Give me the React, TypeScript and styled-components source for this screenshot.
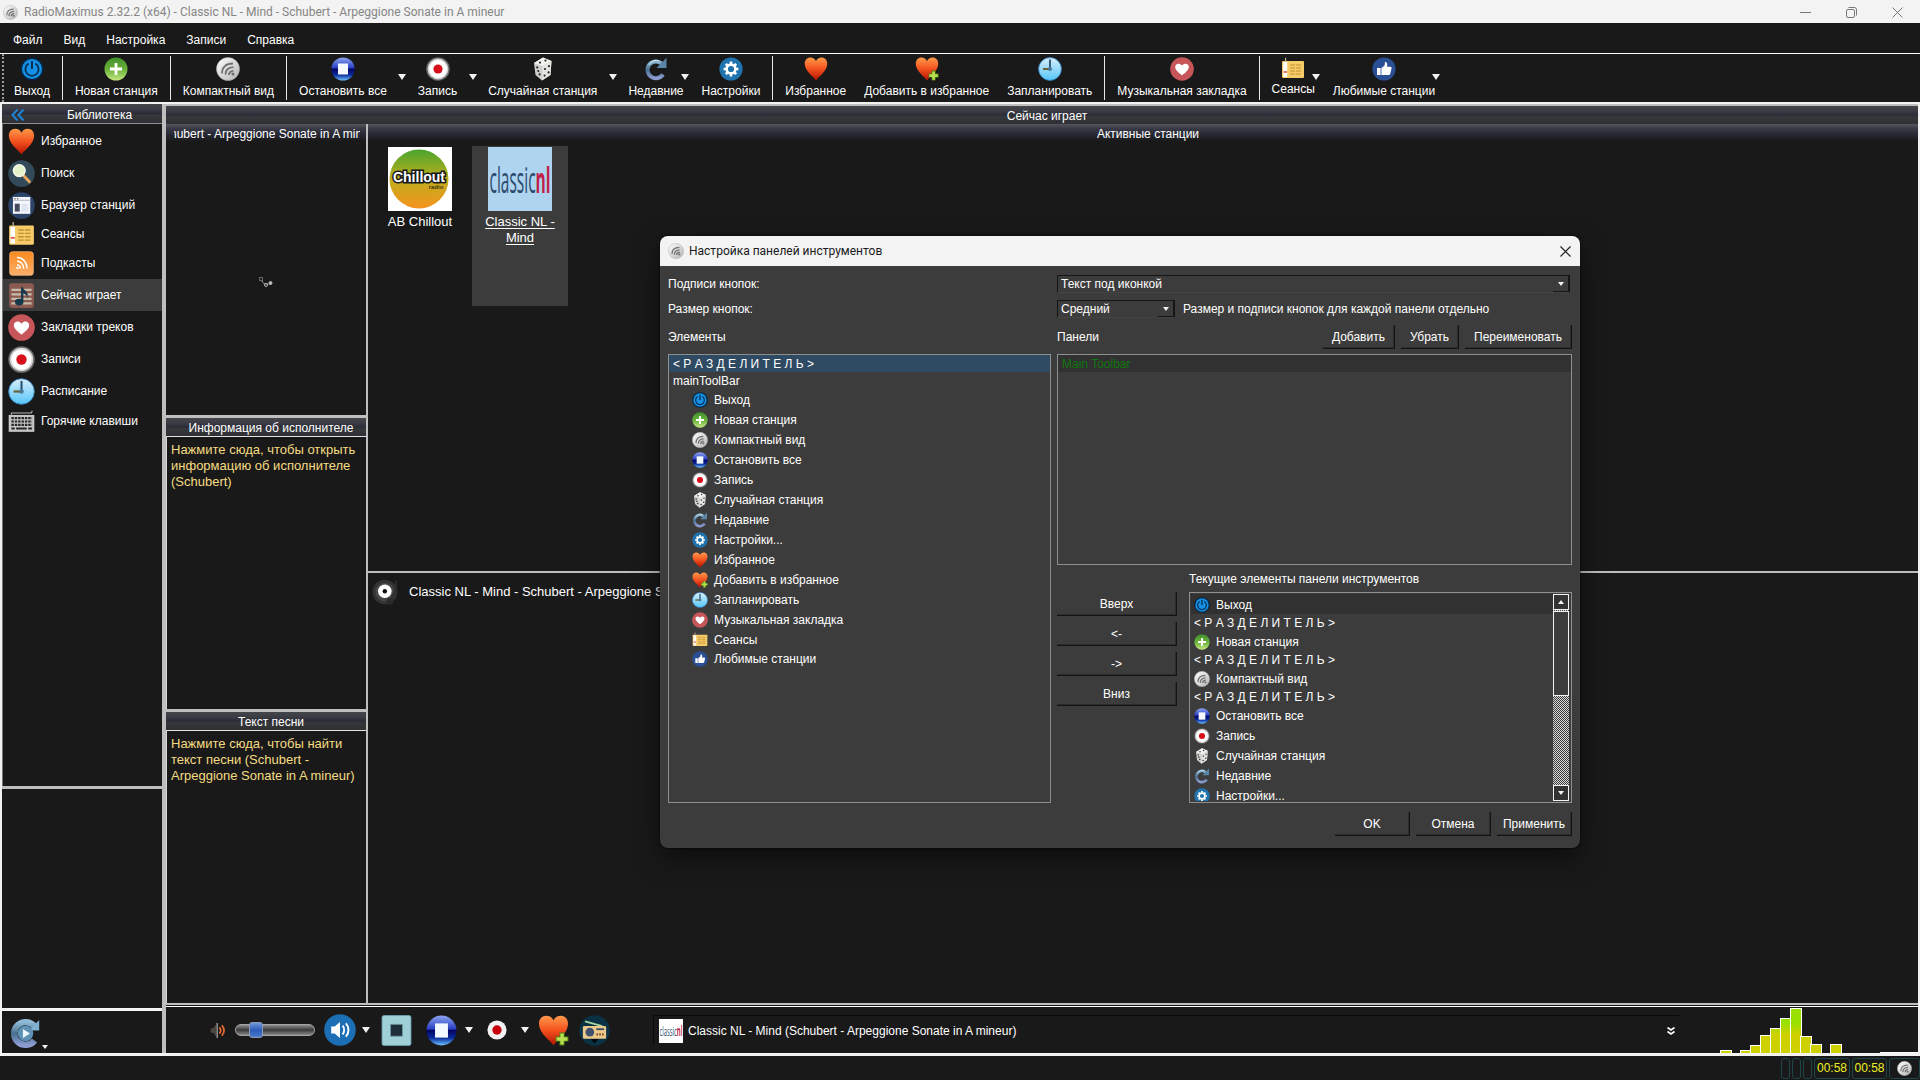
import React from 'react';
import styled, { createGlobalStyle, css } from 'styled-components';

const Global = createGlobalStyle`
  * { box-sizing: border-box; }
  body { margin: 0; background: #191919; color: #fff; font: 12px/14px "Liberation Sans", Arial, sans-serif; }
  button, select, input { font: inherit; color: inherit; margin: 0; }
  button { background: none; border: 0; padding: 0; }
  ul { list-style: none; margin: 0; padding: 0; }
  svg { display: block; flex: none; }
`;

/* ---------- icons ---------- */

const Defs = styled.svg`
  position: absolute;
  width: 0;
  height: 0;
`;

const Gradients = () => (
  <Defs aria-hidden="true">
    <defs>
      <linearGradient id="heartG" x1="0" y1="0" x2="0" y2="1">
        <stop offset="0" stopColor="#ff9a4a" />
        <stop offset=".5" stopColor="#f4511e" />
        <stop offset="1" stopColor="#b31204" />
      </linearGradient>
      <linearGradient id="greenG" x1="0" y1="0" x2="0" y2="1">
        <stop offset="0" stopColor="#3f8f2b" />
        <stop offset=".55" stopColor="#6fb63c" />
        <stop offset="1" stopColor="#c6e884" />
      </linearGradient>
      <linearGradient id="blueG" x1="0" y1="0" x2="0" y2="1">
        <stop offset="0" stopColor="#8da4f0" />
        <stop offset=".45" stopColor="#2a3fc4" />
        <stop offset=".5" stopColor="#050560" />
        <stop offset=".75" stopColor="#0a2a9c" />
        <stop offset="1" stopColor="#6fc4ff" />
      </linearGradient>
      <linearGradient id="silverG" x1="0" y1="0" x2="1" y2="1">
        <stop offset="0" stopColor="#ffffff" />
        <stop offset="1" stopColor="#b4b4b4" />
      </linearGradient>
      <linearGradient id="clockG" x1="0" y1="0" x2="0" y2="1">
        <stop offset="0" stopColor="#d8eefb" />
        <stop offset="1" stopColor="#55c6fb" />
      </linearGradient>
      <linearGradient id="steelG" x1="0" y1="0" x2="0" y2="1">
        <stop offset="0" stopColor="#8fbbd8" />
        <stop offset=".5" stopColor="#48708f" />
        <stop offset="1" stopColor="#8c9bd0" />
      </linearGradient>
      <linearGradient id="orangeG" x1="0" y1="0" x2="0" y2="1">
        <stop offset="0" stopColor="#f98a1d" />
        <stop offset="1" stopColor="#fcae6a" />
      </linearGradient>
      <linearGradient id="chillG" x1="0" y1="0" x2="0" y2="1">
        <stop offset="0" stopColor="#4aa52c" />
        <stop offset=".5" stopColor="#bfae1d" />
        <stop offset="1" stopColor="#f6931f" />
      </linearGradient>
    </defs>
  </Defs>
);

const HEART = 'M12 23.5 C9.5 19.5 1.5 15 .8 7.5 C.4 3 3.4 .6 6.4 .6 C9 .6 11 2 12 4.2 C13 2 15 .6 17.6 .6 C20.6 .6 23.6 3 23.2 7.5 C22.5 15 14.5 19.5 12 23.5Z';

const art: Record<string, React.ReactNode> = {
  power: (
    <>
      <circle cx="12" cy="12" r="11.8" fill="#052440" />
      <circle cx="12" cy="12" r="10" fill="#1590e6" />
      <path d="M8.6 6.6 A6.6 6.6 0 1 0 15.4 6.6" fill="none" stroke="#06304f" strokeWidth="1.8" />
      <path d="M12 4 V12" stroke="#06304f" strokeWidth="2" />
    </>
  ),
  plus: (
    <>
      <circle cx="12" cy="12" r="11.5" fill="url(#greenG)" />
      <path d="M12 6 V18 M6 12 H18" stroke="#fff" strokeWidth="2.8" />
    </>
  ),
  radio: (
    <>
      <circle cx="12" cy="12" r="11.5" fill="url(#silverG)" stroke="#aaa" strokeWidth=".6" />
      <g fill="none" stroke="#707070" strokeWidth="1.8">
        <path d="M6 16.5 C6 10 10 6.5 17 6.5" />
        <path d="M9.5 17.5 C9.5 13 12 10.4 17.5 10.2" />
        <path d="M13 18 C13 15.6 14.5 14 17.5 13.8" />
      </g>
      <circle cx="17" cy="17" r="1.6" fill="#707070" />
    </>
  ),
  stop: (
    <>
      <circle cx="12" cy="12" r="11.6" fill="url(#blueG)" />
      <rect x="7" y="6.5" width="10" height="11" fill="#f4f8ff" />
    </>
  ),
  record: (
    <>
      <circle cx="12" cy="12" r="11.8" fill="#6b6b6b" />
      <circle cx="12" cy="12" r="10.4" fill="#d5d5d5" />
      <circle cx="12" cy="12" r="9" fill="#fff" />
      <circle cx="12" cy="12" r="4.6" fill="#d8101c" />
    </>
  ),
  recordSmall: (
    <>
      <circle cx="12" cy="12" r="11.5" fill="#f2f2f2" />
      <circle cx="12" cy="12" r="5.6" fill="#c8000c" />
    </>
  ),
  dice: (
    <>
      <path d="M3 6 L12 .5 L20.5 4 L19.5 18 L11 23.5 L4.5 18Z" fill="#cfcfcb" />
      <path d="M3 6 L12 .5 L20.5 4 L11.5 9Z" fill="#f3f3f0" />
      <path d="M11.5 9 L20.5 4 L19.5 18 L11 23.5Z" fill="#e4e4e0" />
      <g fill="#2a2a2a">
        <circle cx="9" cy="5.6" r="1.1" /><circle cx="14.5" cy="3.6" r="1.1" />
        <circle cx="6.2" cy="10.4" r="1.1" /><circle cx="8.6" cy="17.4" r="1.1" /><circle cx="7.3" cy="14" r="1.1" />
        <circle cx="14" cy="12" r="1.1" /><circle cx="18" cy="9.2" r="1.1" />
        <circle cx="13.6" cy="18.6" r="1.1" /><circle cx="17.6" cy="15.4" r="1.1" />
      </g>
    </>
  ),
  recent: (
    <>
      <path d="M17.5 6.5 A8.4 8.4 0 1 0 19 17.4" fill="none" stroke="url(#steelG)" strokeWidth="4" />
      <path d="M22.5 .8 V11 H12.5Z" fill="#5b86a8" />
      <path d="M5 8 A8.6 8.6 0 0 1 15 3.6" fill="none" stroke="#cfe2f0" strokeWidth="1" />
    </>
  ),
  gear: (
    <>
      <circle cx="12" cy="12" r="11.6" fill="#1f74b0" />
      <circle cx="12" cy="12" r="4.4" fill="none" stroke="#fff" strokeWidth="2.6" />
      <path d="M12 4.6 V7 M12 17 V19.4 M4.6 12 H7 M17 12 H19.4 M6.8 6.8 L8.5 8.5 M15.5 15.5 L17.2 17.2 M17.2 6.8 L15.5 8.5 M8.5 15.5 L6.8 17.2" stroke="#fff" strokeWidth="2.6" />
    </>
  ),
  heart: <path d={HEART} fill="url(#heartG)" />,
  heartPlus: (
    <>
      <path d={HEART} fill="url(#heartG)" />
      <path d="M18.6 13.6 V23.6 M13.6 18.6 H23.6" stroke="#4d7d14" strokeWidth="4" />
      <path d="M18.6 14.4 V22.8 M14.4 18.6 H22.8" stroke="#b6e04e" strokeWidth="2.6" />
    </>
  ),
  clock: (
    <>
      <circle cx="12" cy="12" r="11.4" fill="url(#clockG)" stroke="#2f7fc0" strokeWidth=".8" />
      <path d="M12 2.6 V12" stroke="#27506e" strokeWidth="1.8" />
      <path d="M12 12 H5" stroke="#6b6430" strokeWidth="2" />
      <circle cx="12" cy="12" r="2" fill="#4a7896" />
    </>
  ),
  bookmark: (
    <>
      <circle cx="12" cy="12" r="11.8" fill="#c7565a" />
      <path d="M12 18.4 C9 15.8 5 13.2 5.2 9.8 C5.4 6.6 9.6 5.4 12 8.6 C14.4 5.4 18.6 6.6 18.8 9.8 C19 13.2 15 15.8 12 18.4Z" fill="#fff" />
    </>
  ),
  sessions: (
    <>
      <rect x="1" y="4" width="22" height="17" rx="1" fill="#f6cb6a" />
      <rect x="2.2" y="5" width="4" height="15" fill="#fff" />
      <path d="M4.6 .8 V5" stroke="#c9b68a" strokeWidth="1.2" />
      <path d="M9 8 H21 M9 11 H21 M9 14 H21 M9 17 H21" stroke="#c5922f" strokeWidth="1.2" strokeDasharray="5 1" />
      <path d="M2.6 15 H6" stroke="#d8402c" strokeWidth="1.4" />
    </>
  ),
  thumb: (
    <>
      <circle cx="12" cy="12" r="11.6" fill="#2a4f94" />
      <path d="M5 11 H8.6 V18 H5Z M9.4 11 L12.6 8.4 L13 5 C15.4 5 15.6 7.4 15 9.8 H18.6 C19.6 9.8 19.8 11 19.4 12 L18.2 16.8 C18 17.6 17.4 18 16.6 18 H9.4Z" fill="#fff" />
    </>
  ),
  search: (
    <>
      <circle cx="12" cy="12" r="11.8" fill="#324a5a" />
      <path d="M14 14 L19 19.4" stroke="#e8a55a" strokeWidth="2.6" strokeLinecap="round" />
      <circle cx="10" cy="9.4" r="5.2" fill="#e4f2c9" stroke="#f4f8ea" strokeWidth="1.4" />
    </>
  ),
  browser: (
    <>
      <circle cx="12" cy="12" r="11.8" fill="#2b4468" />
      <rect x="4.4" y="4.4" width="15.4" height="15" fill="#f4f6fb" />
      <path d="M4.4 7.4 H19.8" stroke="#b8bccb" strokeWidth="1" />
      <circle cx="6.2" cy="6" r=".7" fill="#666" /><circle cx="8.6" cy="6" r=".7" fill="#666" />
      <rect x="6" y="10.4" width="4.4" height="7" fill="#454a5e" />
      <rect x="12" y="10.4" width="6" height="7" fill="#dfe5f3" />
    </>
  ),
  podcast: (
    <>
      <rect x="1.5" y="1.5" width="21" height="21" rx="2.5" fill="url(#orangeG)" stroke="#ffc088" strokeWidth=".6" />
      <g fill="none" stroke="#fff" strokeWidth="1.3">
        <path d="M8 6.5 C13 7 16.5 10.5 17 16.5" />
        <path d="M8 9.8 C11.4 10.2 13.6 12.4 14 16.5" />
        <path d="M8 13 C9.8 13.4 10.8 14.4 11 16.5" />
      </g>
      <circle cx="8.4" cy="16" r="1.1" fill="#fff" />
    </>
  ),
  note: (
    <>
      <rect x="1" y="1" width="22" height="22" rx="2.5" fill="#8c5a50" />
      <path d="M3 7 H21 M3 11 H21 M3 15 H21 M3 19 H21" stroke="#c3bba8" strokeWidth="1.8" />
      <path d="M12.6 5 V17" stroke="#17384a" strokeWidth="2" />
      <path d="M11.8 3.4 C13.4 8 19.5 8 17 15 C17.2 11 15 10.6 11.8 9.6Z" fill="#17384a" />
      <ellipse cx="10" cy="17.8" rx="3.8" ry="3" fill="#17384a" />
    </>
  ),
  keyboard: (
    <>
      <path d="M3 6 V4.4 H20 C21 4.4 21.4 3.8 21.4 2.4" fill="none" stroke="#b5b5b5" strokeWidth="1" />
      <rect x=".6" y="6.2" width="22.8" height="15" fill="#c6c6c6" />
      <path d="M3 9 H21.4 M3 12 H21.4 M3 15 H21.4" stroke="#262626" strokeWidth="1.8" strokeDasharray="2.2 .8" />
      <path d="M3 18.2 H6 M7.2 18.2 H16.6 M18 18.2 H21.4" stroke="#262626" strokeWidth="1.8" />
    </>
  ),
  volume: (
    <>
      <circle cx="12" cy="12" r="11.8" fill="#1c6fb4" />
      <path d="M5.4 9.4 H8 L12 6 V18 L8 14.6 H5.4Z" fill="#fff" />
      <path d="M14 8.8 C15.4 10.6 15.4 13.4 14 15.2 M16.4 7 C19 9.8 19 14.2 16.4 17" fill="none" stroke="#fff" strokeWidth="1.5" />
    </>
  ),
  mute: (
    <>
      <path d="M1 8.5 H5 L10 2 V22 L5 15.5 H1Z" fill="#4a4642" />
      <path d="M11.5 0 V24" stroke="#9a9a9a" strokeWidth="2.2" />
      <path d="M15 7 C17.6 10 17.6 14 15 17 M19 3.6 C23.4 9 23.4 15 19 20.4" fill="none" stroke="#e56a2e" strokeWidth="2.8" />
    </>
  ),
  panelStop: (
    <>
      <rect x=".8" y=".4" width="22.4" height="23.2" rx="1.4" fill="#9fd0d8" stroke="#6ca5b2" strokeWidth=".6" />
      <rect x="7.4" y="7.2" width="9.2" height="9.2" fill="#1f2f3a" stroke="#6f9aa5" strokeWidth=".6" />
    </>
  ),
  receiver: (
    <>
      <circle cx="12" cy="12" r="11.8" fill="#0b3145" />
      <path d="M4.6 5 L18 8.6" stroke="#a8d6a0" strokeWidth="1.4" />
      <rect x="3" y="8.6" width="18" height="9.8" rx="1" fill="#eac98a" />
      <circle cx="8.4" cy="13.2" r="3.4" fill="#41506e" />
      <path d="M13.4 11 H19.4" stroke="#3a4a60" strokeWidth="1.4" />
      <path d="M13.4 15 H19.4" stroke="#8a5a2c" strokeWidth="1.8" strokeDasharray="1.4 .8" />
      <path d="M9 18.5 H15 L12 22Z" fill="#05090c" />
    </>
  ),
  replay: (
    <>
      <path d="M19 6.6 A8.8 8.8 0 1 0 19 17.4" fill="none" stroke="url(#steelG)" strokeWidth="5" />
      <path d="M22.6 1.6 V9.6 H14.6Z" fill="#7fb2d2" />
      <circle cx="12" cy="12" r="6" fill="#5f93b5" />
      <path d="M10 8.6 L15.4 12 L10 15.4Z" fill="#f1f9ff" />
    </>
  ),
  disc: (
    <>
      <circle cx="11" cy="12" r="10.6" fill="#333" />
      <circle cx="11" cy="12" r="8" fill="#484848" />
      <circle cx="11" cy="11.4" r="5.8" fill="#fff" />
      <circle cx="11" cy="11.4" r="1.9" fill="#111" />
      <circle cx="15.4" cy="20" r="3" fill="#2b2b2b" />
      <path d="M20.6 2.4 V9 L16 19" fill="none" stroke="#2e2e2e" strokeWidth="1.6" />
    </>
  ),
};

const Icon = ({ name, size = 24 }: { name: string; size?: number }) => (
  <svg width={size} height={size} viewBox="0 0 24 24" aria-hidden="true">
    {art[name]}
  </svg>
);

const Triangle = styled.i<{ $up?: boolean; $small?: boolean }>`
  display: block;
  width: 0;
  height: 0;
  border: ${(p) => (p.$small ? 3 : 4)}px solid transparent;
  border-bottom-width: 0;
  border-top: ${(p) => (p.$small ? 4 : 6)}px solid #f2f2f2;
  ${(p) => p.$up && css`transform: rotate(180deg);`}
`;

/* ---------- main window ---------- */

const Page = styled.div`
  display: flex;
  flex-direction: column;
  min-height: 100vh;
  position: relative;
  background: #191919;
`;

const TitleBar = styled.header`
  display: flex;
  align-items: center;
  gap: 6px;
  height: 23px;
  padding: 1px 0 0 3px;
  background: #f3f3f3;
  color: #858585;
  font-family: Roboto, "Open Sans", sans-serif;
  font-size: 12px;
`;

const WindowButtons = styled.div`
  display: flex;
  align-items: center;
  margin-left: auto;
`;

const WindowButton = styled.button`
  display: grid;
  place-items: center;
  width: 46px;
  height: 20px;
  color: #777;
`;

const MenuBar = styled.nav`
  display: flex;
  align-items: center;
  gap: 21px;
  height: 31px;
  padding: 3px 13px 0;
  border-bottom: 1px solid #fff;
`;

const Toolbar = styled.div`
  display: flex;
  height: 48px;
  padding-left: 2px;
`;

const Handle = styled.div`
  width: 3px;
  border-left: 2px dotted #9a9a9a;
`;

const ToolItem = styled.div`
  display: flex;
  position: relative;
`;

const ToolButton = styled.button`
  display: flex;
  flex-direction: column;
  align-items: center;
  gap: 3px;
  padding: 3px 9px 0;
  white-space: nowrap;
`;

const ToolIcon = styled.span<{ $short?: boolean }>`
  display: block;
  height: ${(p) => (p.$short ? 22 : 24)}px;
  overflow: hidden;
`;

const SplitArrow = styled.button`
  display: flex;
  justify-content: center;
  align-items: flex-start;
  width: 13px;
  padding-top: 20px;
`;

const CornerArrow = styled.span`
  position: absolute;
  right: 4px;
  top: 20px;
`;

const ToolSeparator = styled.div`
  width: 1px;
  margin: 2px 3px;
  background: #e8e8e8;
`;

const Workspace = styled.div`
  display: flex;
  flex: 1;
  border: 2px solid #f2f2f2;
  border-bottom-width: 3px;
`;

const Sidebar = styled.aside`
  display: flex;
  flex-direction: column;
  flex: 0 0 160px;
`;

const PanelHeader = styled.h2<{ $lined?: boolean; $short?: boolean }>`
  display: flex;
  align-items: center;
  justify-content: center;
  flex: none;
  height: ${(p) => (p.$lined ? 19 : p.$short ? 17 : 18)}px;
  margin: 0;
  padding: 2px 0 0 10px;
  border-bottom: ${(p) => (p.$lined ? '1px solid #e2e2e2' : '0')};
  font-size: 12px;
  font-weight: 400;
  white-space: nowrap;
  background: ${(p) =>
    p.$short
      ? 'linear-gradient(#55555c, #3a3b46 25%, #272935 60%, #1e1f22 90%, #191919)'
      : 'linear-gradient(#45464a, #3c3d45 25%, #2b2c38 50%, #36373a 60%, #2f3033)'};
`;

const SidebarHeader = styled(PanelHeader)`
  height: 20px;
  padding-left: 9px;
  border-bottom: 1px solid #8f8f8f;

  button { color: #1d84d6; }
  span { flex: 1; padding-left: 12px; text-align: center; }
`;

const NavList = styled.ul`
  flex: 1;
  padding-top: 1px;
  border-left: 1px solid #777;
`;

const NavButton = styled.button<{ $height: number; $active?: boolean }>`
  display: flex;
  align-items: center;
  gap: 6px;
  width: 100%;
  height: ${(p) => p.$height}px;
  padding-left: 5px;
  background: ${(p) => (p.$active ? '#3c3c3c' : 'none')};
`;

const SideBox = styled.div`
  height: 219px;
`;

const SideFooter = styled.div`
  display: flex;
  align-items: flex-end;
  height: 42px;
  padding: 0 0 4px 8px;
  gap: 1px;
`;

const VRule = styled.div<{ $w: number }>`
  flex: 0 0 ${(p) => p.$w}px;
  background: #bebebe;
`;

const HRule = styled.div<{ $h: number; $bright?: boolean }>`
  flex: 0 0 ${(p) => p.$h}px;
  background: ${(p) => (p.$bright ? '#f4f4f4' : '#bebebe')};
`;

const Main = styled.main`
  display: flex;
  flex-direction: column;
  flex: 1;
  min-width: 0;
`;

const Split = styled.div`
  display: flex;
  flex: 1;
`;

const InfoColumn = styled.div`
  display: flex;
  flex-direction: column;
  flex: 0 0 200px;
  min-width: 0;
`;

const InfoPanel = styled.section`
  display: flex;
  flex-direction: column;
  flex: 1 1 0;
  min-width: 0;
`;

const Marquee = styled.span`
  flex: 1;
  margin: 0 6px 0 -2px;
  overflow: hidden;
  text-indent: -18px;
`;

const CoverArea = styled.div`
  display: grid;
  place-items: center;
  flex: 1;
  padding-top: 8px;
`;

const HintLink = styled.a`
  flex: 1;
  padding: 5px 4px;
  border-left: 1px solid #d5d5d5;
  color: #f5dc82;
  font-size: 13px;
  line-height: 16px;
  text-decoration: none;
`;

const StationColumn = styled.div`
  display: flex;
  flex-direction: column;
  flex: 1;
`;

const Stations = styled.div`
  display: flex;
  align-items: flex-start;
  gap: 4px;
  flex: 49 1 0;
  padding: 5px 4px;
`;

const StationTile = styled.button<{ $active?: boolean }>`
  display: flex;
  flex-direction: column;
  align-items: center;
  gap: 3px;
  width: 96px;
  height: 160px;
  padding: 1px 8px;
  font-size: 13px;
  line-height: 16px;
  background: ${(p) => (p.$active ? '#3c3c3c' : 'none')};
  text-decoration: ${(p) => (p.$active ? 'underline' : 'none')};
  text-underline-offset: 2px;
`;

const Playlist = styled.div`
  flex: 49 1 0;
  padding: 5px 4px;
`;

const Track = styled.div`
  display: flex;
  align-items: center;
  gap: 9px;
  font-size: 13px;
  line-height: 28px;
`;

const Player = styled.div`
  display: flex;
  align-items: center;
  height: 47px;
  border-top: 1px solid #fff;
  margin-top: 1px;
  padding-left: 44px;
`;

const Volume = styled.input`
  appearance: none;
  width: 80px;
  height: 20px;
  background: none;

  && { margin: 0 8px 0 10px; }

  &::-webkit-slider-runnable-track {
    height: 12px;
    border: 1px solid #a5a5a5;
    border-radius: 6px;
    background: linear-gradient(#8e8e8e, #3a3a3a 50%, #8a8a8a);
  }
  &::-webkit-slider-thumb {
    appearance: none;
    width: 14px;
    height: 16px;
    margin-top: -3px;
    border: 1px solid #8f9bb0;
    border-radius: 3px;
    background: linear-gradient(#6f96d8, #2c5cb8 50%, #4a7cd0);
  }
`;

const PlayerGroup = styled.div`
  display: flex;
`;

const PlayerButton = styled.button<{ $w: number }>`
  display: grid;
  place-items: center;
  width: ${(p) => p.$w}px;
  height: 40px;
`;

const NowPlaying = styled.div`
  display: flex;
  align-items: center;
  gap: 5px;
  flex: 1;
  height: 30px;
  margin-left: 42px;
  padding: 0 4px 0 5px;
  border-top: 1px solid #0a0a0a;
  border-left: 1px solid #0a0a0a;
`;

const NowTitle = styled.span`
  flex: 1;
`;

const StatusBar = styled.footer`
  display: flex;
  align-items: center;
  justify-content: flex-end;
  gap: 2px;
  height: 24px;
  color: #f0f020;
  font-size: 12px;
`;

const StatusBox = styled.div<{ $w: number }>`
  display: grid;
  place-items: center;
  width: ${(p) => p.$w}px;
  height: 21px;
  border: 1px solid #1e4547;
  border-radius: 3px;
`;

/* ---------- dialog ---------- */

const Dialog = styled.div`
  position: absolute;
  left: 660px;
  top: 236px;
  width: 920px;
  border-radius: 8px;
  overflow: hidden;
  background: #3c3c3c;
  box-shadow: 0 10px 28px rgba(0, 0, 0, 0.5), 0 0 2px #000;
`;

const DialogTitle = styled.div`
  display: flex;
  align-items: center;
  gap: 5px;
  height: 30px;
  padding: 0 2px 0 8px;
  background: #f3f3f3;
  color: #1a1a1a;
  font-family: Roboto, "Open Sans", sans-serif;
  font-size: 12px;
`;

const CloseButton = styled.button`
  display: grid;
  place-items: center;
  width: 26px;
  height: 26px;

  && { margin-left: auto; }
`;

const DialogBody = styled.div`
  display: flex;
  flex-direction: column;
  padding: 9px 8px 12px;
`;

const Row = styled.div<{ $h: number; $gap: number }>`
  display: grid;
  grid-template-columns: 383fr 515fr;
  column-gap: 6px;
  align-items: center;
  height: ${(p) => p.$h}px;
  margin-bottom: ${(p) => p.$gap}px;
`;

const Cell = styled.div`
  display: flex;
  align-items: center;
  gap: 6px;
`;

const SelectBox = styled.span<{ $w?: number }>`
  display: block;
  position: relative;
  flex: ${(p) => (p.$w ? `0 0 ${p.$w}px` : '1')};
  margin-right: 2px;

  select {
    display: block;
    appearance: none;
    width: 100%;
    height: 18px;
    padding: 0 18px 0 3px;
    border: 1px solid #161616;
    border-bottom-color: #444;
    border-radius: 0;
    background: #3c3c3c;
    outline: 0;
  }
`;

const SelectArrow = styled.span`
  position: absolute;
  right: 1px;
  top: 1px;
  display: grid;
  place-items: center;
  width: 16px;
  height: 16px;
  border-right: 1px solid #161616;
  border-bottom: 1px solid #161616;
  pointer-events: none;
`;

const Push = styled.button<{ $w?: number }>`
  width: ${(p) => (p.$w ? `${p.$w}px` : 'auto')};
  height: 24px;
  padding: ${(p) => (p.$w ? '1px 0 0' : '1px 9px 0')};
  border-right: 1px solid #141414;
  border-bottom: 1px solid #141414;
  box-shadow: inset -1px -1px 0 #2c2c2c;
`;

const PushRow = styled.div`
  display: flex;
  justify-content: flex-end;
  gap: 6px;
  margin-left: auto;
`;

const DialogActions = styled(PushRow)`
  padding-top: 9px;
`;

const Lists = styled.div`
  display: grid;
  grid-template-columns: 383fr 515fr;
  column-gap: 6px;
`;

const ListBox = styled.ul<{ $h: number }>`
  height: ${(p) => p.$h}px;
  border: 1px solid #8e9090;
  overflow: hidden;
  flex: 1;
`;

const Item = styled.li<{ $h: number; $indent?: number; $bg?: string; $color?: string }>`
  display: flex;
  align-items: center;
  gap: 6px;
  height: ${(p) => p.$h}px;
  padding-top: ${(p) => (p.$h > 17 ? 2 : 0)}px;
  padding-left: ${(p) => p.$indent ?? 4}px;
  background: ${(p) => p.$bg ?? 'none'};
  color: ${(p) => p.$color ?? 'inherit'};
  white-space: nowrap;
`;

const CurrentLabel = styled.div`
  height: 27px;
  padding-left: 132px;
  line-height: 28px;
`;

const Current = styled.div`
  display: flex;
  gap: 12px;
`;

const MoveButtons = styled.div`
  display: flex;
  flex-direction: column;
  gap: 6px;
  flex: 0 0 120px;
`;

const ScrollList = styled.div`
  display: flex;
  flex: 1;
  height: 211px;
  padding: 1px;
  border: 1px solid #8e9090;
`;

const ScrollItems = styled.ul`
  flex: 1;
  overflow: hidden;
`;

const ScrollBar = styled.div`
  display: flex;
  flex-direction: column;
  gap: 1px;
  width: 16px;
  margin-right: 1px;
  background: repeating-conic-gradient(#3c3c3c 0 25%, #d8d8d8 0 50%) 0 0 / 2px 2px;
`;

const ScrollButton = styled.button`
  display: grid;
  place-items: center;
  height: 16px;
  border: 1px solid #f2f2f2;
  background: #333;
`;

const ScrollThumb = styled.div`
  height: 85px;
  margin-bottom: auto;
  border: 1px solid #f2f2f2;
  background: #3c3c3c;
`;

/* ---------- data ---------- */

type Tool = { icon: string; label: string; arrow?: 'split' | 'corner'; sep?: boolean };

const tools: Tool[] = [
  { icon: 'power', label: 'Выход', sep: true },
  { icon: 'plus', label: 'Новая станция', sep: true },
  { icon: 'radio', label: 'Компактный вид', sep: true },
  { icon: 'stop', label: 'Остановить все', arrow: 'split' },
  { icon: 'record', label: 'Запись', arrow: 'split' },
  { icon: 'dice', label: 'Случайная станция', arrow: 'split' },
  { icon: 'recent', label: 'Недавние', arrow: 'corner' },
  { icon: 'gear', label: 'Настройки', sep: true },
  { icon: 'heart', label: 'Избранное' },
  { icon: 'heartPlus', label: 'Добавить в избранное' },
  { icon: 'clock', label: 'Запланировать', sep: true },
  { icon: 'bookmark', label: 'Музыкальная закладка', sep: true },
  { icon: 'sessions', label: 'Сеансы', arrow: 'corner' },
  { icon: 'thumb', label: 'Любимые станции', arrow: 'corner' },
];

const nav: [string, string, number][] = [
  ['heart', 'Избранное', 32],
  ['search', 'Поиск', 32],
  ['browser', 'Браузер станций', 32],
  ['sessions', 'Сеансы', 26],
  ['podcast', 'Подкасты', 32],
  ['note', 'Сейчас играет', 32],
  ['bookmark', 'Закладки треков', 32],
  ['record', 'Записи', 32],
  ['clock', 'Расписание', 32],
  ['keyboard', 'Горячие клавиши', 28],
];

const SEPARATOR = '< Р А З Д Е Л И Т Е Л Ь >';
const current = [0, -1, 1, -1, 2, -1, 3, 4, 5, 6, 7];
const spectrum: [number, number][] = [
  [0, 3], [20, 3], [30, 8], [40, 18], [50, 25], [60, 35],
  [70, 45], [80, 17], [90, 9], [110, 9],
];

const ChilloutLogo = () => (
  <svg width="64" height="64" viewBox="0 0 64 64">
    <rect width="64" height="64" fill="#fff" />
    <circle cx="31" cy="32" r="29.5" fill="url(#chillG)" />
    <g fontFamily="Liberation Sans, sans-serif" fontWeight="700">
      <text x="31" y="35" fontSize="14" textAnchor="middle" fill="#fff" stroke="#1a1a1a" strokeWidth="3" paintOrder="stroke">Chillout</text>
      <text x="48" y="42" fontSize="6" textAnchor="middle" fill="#3a3308">radio</text>
    </g>
  </svg>
);

const ClassicLogo = ({ size, bg }: { size: number; bg: string }) => (
  <svg width={size} height={size} viewBox="0 0 64 64">
    <rect width="64" height="64" fill={bg} />
    <svg x="1" y="10" width="62" height="40" viewBox="0 0 72 20" preserveAspectRatio="none">
      <text x="36" y="18" textAnchor="middle" fontFamily="Open Sans, sans-serif" fontSize="18" fill="#2c4a6e">
        classic<tspan fill="#c01f4a" fontWeight="700">nl</tspan>
      </text>
    </svg>
  </svg>
);

const itemLabel = (t: Tool) => (t.icon === 'gear' ? 'Настройки...' : t.label);

export default function App() {
  return (
    <Page>
      <Global />
      <Gradients />
      <TitleBar>
        <Icon name="radio" size={15} />
        <span>RadioMaximus 2.32.2 (x64) - Classic NL - Mind - Schubert - Arpeggione Sonate in A mineur</span>
        <WindowButtons>
          <WindowButton aria-label="Свернуть">
            <svg width="11" height="11"><path d="M0 5.5 H11" stroke="currentColor" /></svg>
          </WindowButton>
          <WindowButton aria-label="Восстановить">
            <svg width="11" height="11" fill="none" stroke="currentColor">
              <rect x=".5" y="2.5" width="8" height="8" rx="1.5" />
              <path d="M2.5 .5 H8.5 A2 2 0 0 1 10.5 2.5 V8.5" />
            </svg>
          </WindowButton>
          <WindowButton aria-label="Закрыть">
            <svg width="11" height="11"><path d="M.5 .5 L10.5 10.5 M10.5 .5 L.5 10.5" stroke="currentColor" /></svg>
          </WindowButton>
        </WindowButtons>
      </TitleBar>

      <MenuBar>
        {['Файл', 'Вид', 'Настройка', 'Записи', 'Справка'].map((m) => (
          <button key={m}>{m}</button>
        ))}
      </MenuBar>

      <Toolbar>
        <Handle />
        {tools.map((t) => (
          <React.Fragment key={t.label}>
            <ToolItem>
              <ToolButton>
                <ToolIcon $short={t.icon === 'sessions'}><Icon name={t.icon} /></ToolIcon>
                {t.label}
              </ToolButton>
              {t.arrow === 'split' && <SplitArrow aria-label="Меню"><Triangle /></SplitArrow>}
              {t.arrow === 'corner' && <CornerArrow><Triangle /></CornerArrow>}
            </ToolItem>
            {t.sep && <ToolSeparator />}
          </React.Fragment>
        ))}
      </Toolbar>

      <Workspace>
        <Sidebar>
          <SidebarHeader>
            <button aria-label="Свернуть библиотеку">
              <svg width="14" height="12" fill="none" stroke="currentColor" strokeWidth="2">
                <path d="M6.5 .5 L1.5 6 L6.5 11.5 M12.5 .5 L7.5 6 L12.5 11.5" />
              </svg>
            </button>
            <span>Библиотека</span>
          </SidebarHeader>
          <NavList>
            {nav.map(([icon, label, h]) => (
              <li key={label}>
                <NavButton $height={h} $active={icon === 'note'}>
                  <Icon name={icon} size={27} />
                  {label}
                </NavButton>
              </li>
            ))}
          </NavList>
          <HRule $h={3} />
          <SideBox />
          <HRule $h={3} $bright />
          <SideFooter>
            <Icon name="replay" size={31} />
            <Triangle $small />
          </SideFooter>
        </Sidebar>
        <VRule $w={4} />
        <Main>
          <HRule $h={2} />
          <PanelHeader>Сейчас играет</PanelHeader>
          <Split>
            <InfoColumn>
              <InfoPanel>
                <PanelHeader $short><Marquee>Schubert - Arpeggione Sonate in A mineur</Marquee></PanelHeader>
                <CoverArea>
                  <svg width="16" height="12" fill="none" stroke="#b8b8b8">
                    <rect x="1.5" y="1.5" width="3" height="3" strokeDasharray="1 1" />
                    <path d="M4 5 L6 8 H13" strokeDasharray="2 1" />
                    <circle cx="8" cy="9" r="1.5" />
                    <circle cx="12.5" cy="7" r="1.5" fill="#ccc" />
                  </svg>
                </CoverArea>
              </InfoPanel>
              <HRule $h={3} />
              <InfoPanel>
                <PanelHeader $lined>Информация об исполнителе</PanelHeader>
                <HintLink href="#artist">Нажмите сюда, чтобы открыть информацию об исполнителе (Schubert)</HintLink>
              </InfoPanel>
              <HRule $h={3} />
              <InfoPanel>
                <PanelHeader $lined>Текст песни</PanelHeader>
                <HintLink href="#lyrics">Нажмите сюда, чтобы найти текст песни (Schubert - Arpeggione Sonate in A mineur)</HintLink>
              </InfoPanel>
            </InfoColumn>
            <VRule $w={2} />
            <StationColumn>
              <PanelHeader $short>Активные станции</PanelHeader>
              <Stations>
                <StationTile><ChilloutLogo />AB Chillout</StationTile>
                <StationTile $active><ClassicLogo size={64} bg="#aed4f0" />Classic NL - Mind</StationTile>
              </Stations>
              <HRule $h={2} />
              <Playlist>
                <Track><Icon name="disc" size={28} />Classic NL - Mind - Schubert - Arpeggione Sonate in A mineur</Track>
              </Playlist>
            </StationColumn>
          </Split>
          <HRule $h={2} />
          <Player>
            <Icon name="mute" size={15} />
            <Volume type="range" min="0" max="100" defaultValue="21" aria-label="Громкость" />
            <PlayerButton $w={34} aria-label="Звук"><Icon name="volume" size={32} /></PlayerButton>
            <PlayerButton $w={18} aria-label="Меню звука"><Triangle /></PlayerButton>
            <PlayerButton $w={42} aria-label="Стоп"><Icon name="panelStop" size={31} /></PlayerButton>
            <PlayerButton $w={48} aria-label="Остановить все"><Icon name="stop" size={31} /></PlayerButton>
            <PlayerGroup>
              <PlayerButton $w={8} aria-label="Меню остановки"><Triangle /></PlayerButton>
              <PlayerButton $w={48} aria-label="Запись"><Icon name="recordSmall" size={20} /></PlayerButton>
              <PlayerButton $w={8} aria-label="Меню записи"><Triangle /></PlayerButton>
              <PlayerButton $w={48} aria-label="Добавить в избранное"><Icon name="heartPlus" size={31} /></PlayerButton>
              <PlayerButton $w={34} aria-label="Станции"><Icon name="receiver" size={31} /></PlayerButton>
            </PlayerGroup>
            <NowPlaying>
              <ClassicLogo size={24} bg="#fff" />
              <NowTitle>Classic NL - Mind (Schubert - Arpeggione Sonate in A mineur)</NowTitle>
              <svg width="8" height="8" fill="none" stroke="#fff" strokeWidth="1.6">
                <path d="M.5 .5 L4 3 L7.5 .5 M.5 4.5 L4 7 L7.5 4.5" />
              </svg>
            </NowPlaying>
            <svg width="239" height="46" viewBox="0 0 239 46">
              <defs>
                <linearGradient id="spec" gradientUnits="userSpaceOnUse" x1="0" y1="0" x2="0" y2="46">
                  <stop offset=".35" stopColor="#98e000" />
                  <stop offset=".6" stopColor="#cfd000" />
                </linearGradient>
              </defs>
              {spectrum.map(([x, h]) => (
                <rect key={x} x={41.5 + x} y={46.5 - h} width="11" height={h} fill="url(#spec)" stroke="#fff" />
              ))}
              <path d="M201 45.5 H239" stroke="#fff" />
            </svg>
          </Player>
        </Main>
      </Workspace>

      <StatusBar>
        <StatusBox $w={9} />
        <StatusBox $w={9} />
        <StatusBox $w={9} />
        <StatusBox $w={36}>00:58</StatusBox>
        <StatusBox $w={35}>00:58</StatusBox>
        <StatusBox $w={31}><Icon name="radio" size={15} /></StatusBox>
      </StatusBar>

      <Dialog role="dialog" aria-label="Настройка панелей инструментов">
        <DialogTitle>
          <Icon name="radio" size={16} />
          Настройка панелей инструментов
          <CloseButton aria-label="Закрыть окно">
            <svg width="11" height="11"><path d="M.5 .5 L10.5 10.5 M10.5 .5 L.5 10.5" stroke="#222" strokeWidth="1.2" /></svg>
          </CloseButton>
        </DialogTitle>
        <DialogBody>
          <Row $h={18} $gap={7}>
            <label htmlFor="captions">Подписи кнопок:</label>
            <Cell>
              <SelectBox>
                <select id="captions"><option>Текст под иконкой</option></select>
                <SelectArrow><Triangle $small /></SelectArrow>
              </SelectBox>
            </Cell>
          </Row>
          <Row $h={18} $gap={7}>
            <label htmlFor="sizes">Размер кнопок:</label>
            <Cell>
              <SelectBox $w={118}>
                <select id="sizes"><option>Средний</option></select>
                <SelectArrow><Triangle $small /></SelectArrow>
              </SelectBox>
              Размер и подписи кнопок для каждой панели отдельно
            </Cell>
          </Row>
          <Row $h={24} $gap={5}>
            <span>Элементы</span>
            <Cell>
              Панели
              <PushRow>
                <Push>Добавить</Push>
                <Push>Убрать</Push>
                <Push>Переименовать</Push>
              </PushRow>
            </Cell>
          </Row>
          <Lists>
            <ListBox $h={449}>
              <Item $h={17} $bg="#2f4a63">{SEPARATOR}</Item>
              <Item $h={17}>mainToolBar</Item>
              {tools.map((t) => (
                <Item key={t.label} $h={t.icon === 'sessions' ? 19 : 20} $indent={23}>
                  <Icon name={t.icon} size={16} />
                  {itemLabel(t)}
                </Item>
              ))}
            </ListBox>
            <div>
              <ListBox $h={211}>
                <Item $h={17} $bg="#313131" $color="#0f780f">Main Toolbar</Item>
              </ListBox>
              <CurrentLabel>Текущие элементы панели инструментов</CurrentLabel>
              <Current>
                <MoveButtons>
                  <Push>Вверх</Push>
                  <Push>&lt;-</Push>
                  <Push>-&gt;</Push>
                  <Push>Вниз</Push>
                </MoveButtons>
                <ScrollList>
                  <ScrollItems>
                    {current.map((c, i) =>
                      c < 0 ? (
                        <Item key={i} $h={17} $indent={3}>{SEPARATOR}</Item>
                      ) : (
                        <Item key={i} $h={20} $indent={3} $bg={i === 0 ? '#313131' : undefined}>
                          <Icon name={tools[c].icon} size={16} />
                          {itemLabel(tools[c])}
                        </Item>
                      ),
                    )}
                  </ScrollItems>
                  <ScrollBar>
                    <ScrollButton aria-label="Прокрутить вверх"><Triangle $small $up /></ScrollButton>
                    <ScrollThumb />
                    <ScrollButton aria-label="Прокрутить вниз"><Triangle $small /></ScrollButton>
                  </ScrollBar>
                </ScrollList>
              </Current>
            </div>
          </Lists>
          <DialogActions>
            <Push $w={75}>OK</Push>
            <Push $w={75}>Отмена</Push>
            <Push $w={75}>Применить</Push>
          </DialogActions>
        </DialogBody>
      </Dialog>
    </Page>
  );
}
